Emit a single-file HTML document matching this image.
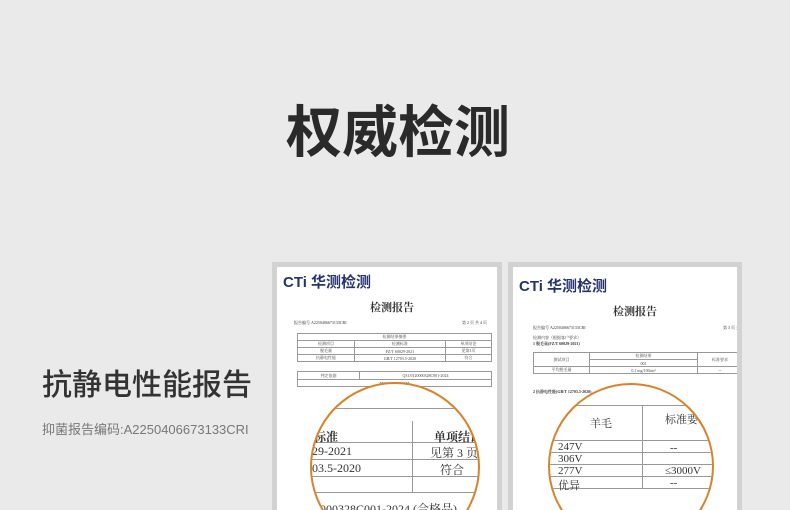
<!DOCTYPE html>
<html><head><meta charset="utf-8"><style>
*{margin:0;padding:0;box-sizing:border-box}
html,body{width:790px;height:510px;overflow:hidden}
body{background:#eaeaea;position:relative;font-family:"Liberation Sans","Noto Sans CJK SC",sans-serif}
.a{position:absolute;white-space:nowrap}
.doc{position:absolute;background:#fff;border:5px solid #d2d2d2;border-bottom:none;overflow:hidden}
.s{font-family:"Liberation Serif","Noto Serif CJK SC",serif;color:#333}
table{border-collapse:collapse;position:absolute}
td{border:1px solid #999;font-family:"Liberation Serif","Noto Serif CJK SC",serif;color:#444;text-align:center}
.logo{position:absolute;font-weight:bold;color:#26336e;font-size:15px}
</style></head><body>
<div class="a" style="left:286px;top:88px;font-size:56px;font-weight:bold;color:#2a2a2a">权威检测</div>
<div class="a" style="left:42px;top:360px;font-size:30px;color:#333;font-weight:500">抗静电性能报告</div>
<div class="a" style="left:42px;top:419px;font-size:13px;color:#777">抑菌报告编码:A2250406673133CRI</div>

<div class="doc" style="left:272px;top:262px;width:230px;height:248px">
<div class="logo" style="left:6px;top:4px">CTi 华测检测</div>
<div class="a s" style="left:93px;top:32px;font-size:11px;font-weight:bold">检测报告</div>
<div class="a s" style="left:17px;top:53px;font-size:4px">报告编号 A2250406673133CRI</div>
<div class="a s" style="left:185px;top:53px;font-size:4px">第 2 页 共 4 页</div>
<table style="left:20px;top:66px;width:195px;font-size:4px"><tr><td colspan=3 style="height:7px">检测结果摘要</td></tr><tr><td style="height:7px">检测项目</td><td>检测标准</td><td>单项结论</td></tr><tr><td style="height:7px">脱毛量</td><td>FZ/T 60029-2021</td><td>见第3页</td></tr><tr><td style="height:7px">抗静电性能</td><td>GB/T 12703.5-2020</td><td>符合</td></tr></table>
<table style="left:20px;top:104px;width:195px;font-size:4px"><tr><td style="width:62px;height:8px">判定依据</td><td>Q31/0120000328C001-2024</td></tr><tr><td colspan=2 style="height:7px">***************</td></tr></table>
<div style="position:absolute;left:33px;top:115px;width:170px;height:170px;border-radius:50%;border:2px solid #d9822b;background:#fff;overflow:hidden">
<div style="position:absolute;left:0;top:58px;width:170px;border-top:1px solid #999"></div>
<div style="position:absolute;left:0;top:75px;width:170px;border-top:1px solid #999"></div>
<div style="position:absolute;left:0;top:92px;width:170px;border-top:1px solid #999"></div>
<div style="position:absolute;left:0;top:108px;width:170px;border-top:1px solid #999"></div>
<div style="position:absolute;left:100px;top:37px;height:71px;border-left:1px solid #999"></div>
<div style="position:absolute;left:0;top:24px;width:170px;border-top:1px solid #999"></div>
<div class="a s" style="left:2px;top:44px;font-size:12px;font-weight:bold">标准</div>
<div class="a s" style="left:122px;top:44px;font-size:12px;font-weight:bold">单项结论</div>
<div class="a s" style="left:0px;top:60px;font-size:12px">29-2021</div>
<div class="a s" style="left:118px;top:60px;font-size:12px">见第 3 页</div>
<div class="a s" style="left:0px;top:77px;font-size:12px">03.5-2020</div>
<div class="a s" style="left:128px;top:77px;font-size:12px">符合</div>
<div class="a s" style="left:8px;top:116px;font-size:12px">000328C001-2024 (合格品)</div>
</div>
</div>

<div class="doc" style="left:508px;top:262px;width:234px;height:248px">
<div class="logo" style="left:6px;top:8px">CTi 华测检测</div>
<div class="a s" style="left:100px;top:36px;font-size:11px;font-weight:bold">检测报告</div>
<div class="a s" style="left:20px;top:58px;font-size:4px">报告编号 A2250406673133CRI</div>
<div class="a s" style="left:210px;top:58px;font-size:4px">第 3 页 共</div>
<div class="a s" style="left:20px;top:68px;font-size:4px">检测内容（根据客户要求）</div>
<div class="a s" style="left:20px;top:74px;font-size:4px;font-weight:bold">1 脱毛量(FZ/T 60029-2021)</div>
<table style="left:20px;top:85px;width:210px;font-size:4px"><tr><td rowspan=2 style="width:56px">测试项目</td><td style="height:7px">检测结果</td><td rowspan=2 style="width:45px">标准要求</td></tr><tr><td style="height:7px">001</td></tr><tr><td style="height:7px">平均脱毛量</td><td>0.1 mg/100cm²</td><td>--</td></tr></table>
<div class="a s" style="left:20px;top:122px;font-size:4px;font-weight:bold">2 抗静电性能(GB/T 12703.5-2020)</div>
<div style="position:absolute;left:35px;top:116px;width:166px;height:166px;border-radius:50%;border:2px solid #d9822b;background:#fff;overflow:hidden">
<div style="position:absolute;left:0;top:20px;width:166px;border-top:1px solid #999"></div>
<div style="position:absolute;left:0;top:55px;width:166px;border-top:1px solid #999"></div>
<div style="position:absolute;left:0;top:67px;width:166px;border-top:1px solid #999"></div>
<div style="position:absolute;left:0;top:79px;width:166px;border-top:1px solid #999"></div>
<div style="position:absolute;left:0;top:91px;width:166px;border-top:1px solid #999"></div>
<div style="position:absolute;left:0;top:103px;width:166px;border-top:1px solid #999"></div>
<div style="position:absolute;left:0;top:126px;width:166px;border-top:1px solid #999"></div>
<div style="position:absolute;left:92px;top:20px;height:83px;border-left:1px solid #999"></div>
<div style="position:absolute;left:99px;top:126px;height:40px;border-left:1px solid #999"></div>
<div class="a s" style="left:40px;top:30px;font-size:11px">羊毛</div>
<div class="a s" style="left:115px;top:26px;font-size:11px">标准要求</div>
<div class="a s" style="left:8px;top:56px;font-size:11px">247V</div>
<div class="a s" style="left:8px;top:68px;font-size:11px">306V</div>
<div class="a s" style="left:8px;top:80px;font-size:11px">277V</div>
<div class="a s" style="left:8px;top:92px;font-size:11px">优异</div>
<div class="a s" style="left:120px;top:57px;font-size:11px">--</div>
<div class="a s" style="left:115px;top:80px;font-size:11px">≤3000V</div>
<div class="a s" style="left:120px;top:92px;font-size:11px">--</div>
<div class="a s" style="left:0px;top:129px;font-size:11px">检测结果</div>
<div class="a s" style="left:0px;top:145px;font-size:11px">001 棉</div>
<div class="a s" style="left:112px;top:137px;font-size:11px">标准要求</div>
</div>
</div>
</body></html>
